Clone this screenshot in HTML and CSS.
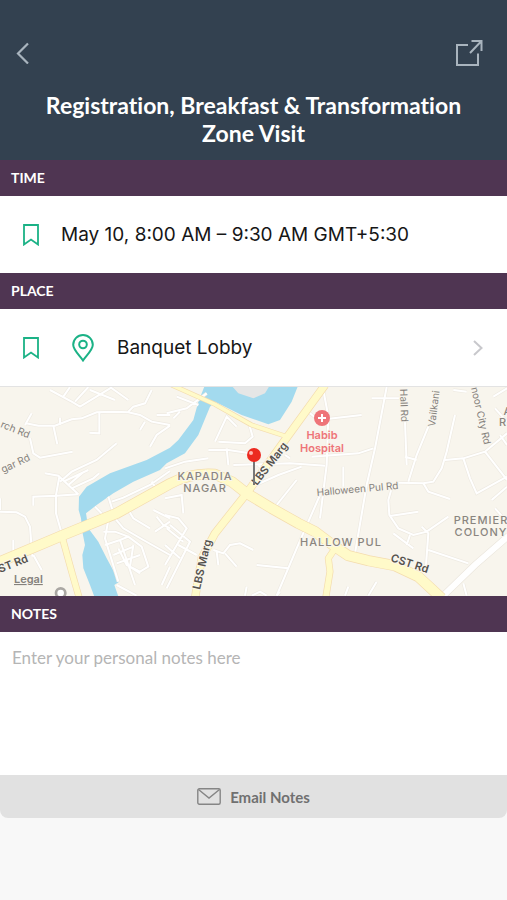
FILE: index.html
```html
<!DOCTYPE html>
<html lang="en">
<head>
  <meta charset="UTF-8">
  <meta name="viewport" content="width=device-width, initial-scale=1.0">
  <title>Session Details</title>
  <link rel="stylesheet" href="styles.css">
</head>
<body>
  <header class="header">
    <div class="toolbar">
      <button class="icon-btn" aria-label="Back">
        <svg width="14" height="22" viewBox="0 0 14 22"><path d="M12 1.500 2 11.500 12 21.500" stroke-width="2.200"/></svg>
      </button>
      <button class="icon-btn" aria-label="Share">
        <svg width="28" height="28" viewBox="0 0 28 28"><path d="M13 6H2v20h21V14.500M15 14 26 2.500M16.500 2H26.500V12" stroke-width="2"/></svg>
      </button>
    </div>
    <h1>Registration, Breakfast &amp; Transformation Zone Visit</h1>
  </header>

  <main>
    <h2 class="band">TIME</h2>
    <div class="row">
      <button class="icon-btn bookmark" aria-label="Bookmark time">
        <svg width="16" height="22" viewBox="0 0 16 22"><path d="M1 1H15V20.500L8 15.500 1 20.500Z" stroke-width="1.800"/></svg>
      </button>
      <span>May 10, 8:00 AM – 9:30 AM GMT+5:30</span>
    </div>

    <h2 class="band">PLACE</h2>
    <div class="row">
      <button class="icon-btn bookmark" aria-label="Bookmark place">
        <svg width="16" height="22" viewBox="0 0 16 22"><path d="M1 1H15V20.500L8 15.500 1 20.500Z" stroke-width="1.800"/></svg>
      </button>
      <a class="place" href="#map">
        <svg class="pin" width="22" height="28" viewBox="0 0 22 28"><path d="M11 26.500C8 22 1.200 16 1.200 10.800a9.800 9.800 0 0 1 19.600 0C20.800 16 14 22 11 26.500Z" stroke-width="2"/><circle cx="11" cy="10.500" r="3.800" stroke-width="2"/></svg>
        <span>Banquet Lobby</span>
        <svg class="chevron" width="10" height="16" viewBox="0 0 10 16"><path d="M1 1 8.500 8 1 15" stroke-width="2"/></svg>
      </a>
    </div>

    <svg class="map" id="map" viewBox="0 0 507 209" role="img" aria-label="Map of Kapadia Nagar">
      <!-- terrain and streets, drawn at triple scale -->
      <svg width="507" height="209" viewBox="0 6 1521 627">
        <path class="river" d="M615 0 595 50 580 105 535 165 510 188 440 225 330 265 260 305 237 335 236 375 243 400 247 440 255 480 247 510 250 550 270 600 285 640H357L343 600 358 590 320 520 295 470 265 430 258 385 290 360 340 325 400 290 480 255 500 235 555 205 595 150 630 65 645 50 725 90 805 118 840 105 875 50 895 0Z"/>
        <path class="island" d="M693 0 715 25 760 40 795 25 810 0Z"/>
        <defs>
          <g id="streets">
            <path d="M75 120 95 85M78 115 115 122 165 122 215 103 245 100 290 82 340 80 385 82 420 90 455 110 510 120M160 122 172 178M180 98 180 120M298 82 298 145 268 143M385 80 400 65 435 55 455 15M420 135 435 110M450 185 470 150 510 122M470 90 510 90"/>
            <path d="M90 160 100 205 120 218 218 200M135 265 175 272 235 328M180 290 215 260 290 225 350 175M190 290 265 255M205 300 250 262M215 310 280 280 298 265M100 362 100 335 170 332 235 328M178 275 168 330 168 385 185 445"/>
            <path d="M0 380 50 382 75 395 90 425 97 515M40 465 40 500M0 340V375M100 510 125 555"/>
            <path d="M335 350 370 338 450 300 510 258M455 290 475 320M325 335 345 400 370 430 430 465 510 510M385 375 400 400 450 430M285 365 325 405 315 460 355 590M315 480 360 465 385 455 425 485 445 545 420 560 380 540 355 490M340 510 400 485M350 535 420 510M385 455 345 440 310 440M360 465 405 600M400 480 390 545 420 565M460 375 510 400M470 395 490 420 510 430M465 440 510 410M485 600 510 545M350 600 410 632"/>
            <path d="M150 15 215 50 240 65 330 10M190 35 210 6M225 50 265 6M330 6 385 45M270 15 345 45M495 250 555 230 625 220M625 195 685 195 750 205M680 190 685 240M700 240 870 235 975 242M855 210 870 220M655 170 735 175 758 155 748 120M645 170 680 95 710 125M500 85 560 70 620 25M520 100 540 80M530 35 595 60M830 360 890 285M745 310 835 270 905 245M775 240 800 265M495 340 545 330 550 385M495 390 535 400 560 430 495 540M500 430 550 470M495 480 540 520M510 420 570 470 500 610M535 480 590 510M640 495 670 505 690 480 720 475 760 495M675 505 710 545M650 500 655 540M770 540 865 550M740 605 735 632M755 632 780 620 800 632M840 620 830 632 890 490 960 330M970 15 985 95 980 240 970 320 960 400"/>
            <path d="M930 85 955 105 1085 90M935 215 1075 205 1120 190M1160 6 1125 190 1100 300 1065 505M1115 40 1215 40M1030 245 1030 305M1215 110 1220 240M1215 215 1250 225M1225 290 1250 210 1285 125M1365 90 1340 200 1325 250 1300 290 1270 295 1195 293M1335 225 1390 220 1455 200 1521 145M1270 295 1285 320 1350 342M1175 310 1165 345 1168 390 1195 430 1240 450 1280 440 1345 395M1170 393 1255 380M1180 445 1240 490M1220 480 1230 450M1265 425 1285 445 1278 540M1285 495 1405 535M1455 200 1521 285M1500 150 1521 180M1390 220 1410 280 1430 325 1521 275M1475 345 1521 305M1485 370 1521 410M1485 70 1521 110M1480 35 1521 10M1360 15 1400 20M1390 595 1400 632M1035 632 1045 605M1105 632 1130 590"/>
          </g>
        </defs>
        <use class="street-edge" href="#streets"/>
        <use class="street" href="#streets"/>
        <path class="avenue-edge" d="M1330 632 1425 540 1525 453"/>
        <path class="avenue" d="M1330 632 1425 540 1525 453"/>
        <g class="lane-edge">
          <path d="M515 0 645 58 755 120 855 153"/>
          <path d="M188 462 215 560 238 640M1005 490 985 520 990 560 977 640" stroke-width="21"/>
          <path d="M975 0 855 165 740 325 645 445 605 520 585 640" stroke-width="25"/>
          <path d="M-5 532 190 450 350 385 510 296Q575 262 645 268L695 290 740 325 815 370 895 415 945 440 1005 485 1045 512 1105 527 1185 542 1255 575 1325 640" stroke-width="33"/>
        </g>
        <g class="lane">
          <path d="M515 0 645 58 755 120 855 153"/>
          <path d="M188 462 215 560 238 640M1005 490 985 520 990 560 977 640" stroke-width="17"/>
          <path d="M975 0 855 165 740 325 645 445 605 520 585 640" stroke-width="21"/>
          <path d="M-5 532 190 450 350 385 510 296Q575 262 645 268L695 290 740 325 815 370 895 415 945 440 1005 485 1045 512 1105 527 1185 542 1255 575 1325 640" stroke-width="29"/>
        </g>
        <circle class="station" cx="182" cy="624" r="14"/>
      </svg>

      <g class="road-name">
        <text transform="translate(0 40) rotate(22)">rch Rd</text>
        <text transform="translate(3 86) rotate(-25)">gar Rd</text>
        <text transform="translate(317 109) rotate(-5)">Halloween Pul Rd</text>
        <text transform="translate(400 2) rotate(88)">Hall Rd</text>
        <text transform="translate(435 40) rotate(-83)">Vailkani</text>
        <text transform="translate(471 1) rotate(77)">noor City Rd</text>
      </g>
      <g class="road-name major">
        <text transform="translate(0 186) rotate(-22)">ST Rd</text>
        <text transform="translate(200 203) rotate(-77)">LBS Marg</text>
        <text transform="translate(257 99) rotate(-52)">LBS Marg</text>
        <text transform="translate(390 174) rotate(18)">CST Rd</text>
      </g>
      <g class="area">
        <text x="205" y="93">KAPADIA</text>
        <text x="205" y="105">NAGAR</text>
        <text x="341" y="159">HALLOW PUL</text>
        <text x="481" y="137">PREMIER</text>
        <text x="481" y="149">COLONY</text>
        <text x="508" y="28">A</text>
        <text x="503" y="39">R</text>
      </g>
      <g class="hospital">
        <circle cx="322" cy="31" r="8"/>
        <path d="M322 27v8M318 31h8"/>
        <text x="322" y="52">Habib</text>
        <text x="322" y="65">Hospital</text>
      </g>
      <text class="legal" x="14" y="196">Legal</text>
      <path class="pin-stem" d="M254 72V98"/>
      <circle class="pin-head" cx="254" cy="68" r="7"/>
      <circle class="pin-shine" cx="251" cy="66" r="2"/>
    </svg>

    <h2 class="band"><label for="notes">NOTES</label></h2>
    <textarea class="notes" id="notes" placeholder="Enter your personal notes here"></textarea>
    <button class="email-btn">
      <svg width="24" height="17" viewBox="0 0 24 17"><rect x=".8" y=".8" width="22.400" height="15.400" rx="1.500"/><path d="M1.500 1.500 12 10 22.500 1.500"/></svg>
      Email Notes
    </button>
  </main>
</body>
</html>
```
FILE: styles.css
```css
* {
  box-sizing: border-box;
}
body {
  margin: 0;
  background-color: #f8f8f8;
  font-family: Inter, "Liberation Sans", sans-serif;
  color: #161616;
}
svg {
  display: block;
  fill: none;
}
.header {
  background-color: #334150;
  padding: 38px 24px 13px 16px;
  color: #fff;
}
.toolbar {
  display: flex;
  justify-content: space-between;
  align-items: center;
  height: 30px;
}
.icon-btn {
  background: none;
  border: none;
  padding: 0;
  cursor: pointer;
  color: #a9b4be;
}
.icon-btn svg,
.place svg {
  stroke: currentColor;
}
h1 {
  margin: 23px 0 0 8px;
  font-family: Lato, sans-serif;
  font-size: 23px;
  line-height: 28px;
  font-weight: 700;
  font-variant-ligatures: none;
  text-align: center;
}
.band {
  margin: 0;
  padding: 0 11px;
  background-color: #4f3552;
  color: #fff;
  font-family: Lato, sans-serif;
  font-size: 14px;
  font-weight: 700;
  line-height: 36px;
}
.row {
  display: flex;
  align-items: center;
  gap: 22px;
  height: 77px;
  padding: 0 24px 0 23px;
  background-color: #fff;
  font-size: 19px;
}
.bookmark {
  color: #1bb286;
}
.place {
  flex: 1;
  display: flex;
  align-items: center;
  gap: 23px;
  padding-left: 11px;
  color: inherit;
  text-decoration: none;
}
.pin {
  color: #1bb286;
}
.chevron {
  margin-left: auto;
  color: #c8c8cc;
}

/* map */
.map {
  width: 100%;
  border-top: 1px solid #e3e3e3;
  background-color: #f8f5ed;
  font-family: Inter, "Liberation Sans", sans-serif;
}
.river {
  fill: #a3daee;
}
.island {
  fill: #e5e6e6;
}
.street-edge {
  stroke: #eeeae2;
  stroke-width: 10;
}
.street {
  stroke: #fff;
  stroke-width: 6;
}
.avenue-edge {
  stroke: #ebe6dd;
  stroke-width: 22;
}
.avenue {
  stroke: #fff;
  stroke-width: 18;
}
.lane-edge {
  stroke: #f4dcae;
  stroke-width: 15;
  stroke-linejoin: round;
}
.lane {
  stroke: #fffac9;
  stroke-width: 11;
  stroke-linejoin: round;
}
.station {
  fill: #fff;
  stroke: #aaa7a3;
  stroke-width: 8;
}
.map text {
  paint-order: stroke;
  stroke: #f8f5ed;
  stroke-width: 2px;
}
.road-name {
  fill: #85817c;
  font-size: 10px;
}
.major {
  fill: #55524e;
  font-size: 11px;
  font-weight: 600;
}
.area {
  fill: #8a8580;
  font-size: 11px;
  font-weight: 500;
  letter-spacing: 1px;
  text-anchor: middle;
}
.hospital {
  fill: #ee7478;
  font-size: 11px;
  font-weight: 600;
  text-anchor: middle;
}
.hospital path {
  stroke: #fff;
  stroke-width: 2;
}
.legal {
  fill: #85817c;
  font-size: 11px;
  font-weight: 600;
  text-decoration: underline;
}
.pin-stem {
  stroke: #777;
  stroke-width: 2;
}
.pin-head {
  fill: #ec2a20;
}
.pin-shine {
  fill: #ffb5ae;
}

.notes {
  display: block;
  width: 100%;
  height: 143px;
  padding: 14px 12px;
  border: none;
  resize: none;
  background-color: #fff;
  font-family: Lato, sans-serif;
  font-size: 17px;
  line-height: 24px;
}
.notes::placeholder {
  color: #b5b5b5;
}
.email-btn {
  display: flex;
  justify-content: center;
  align-items: center;
  gap: 9px;
  width: 100%;
  height: 43px;
  border: none;
  border-radius: 0 0 8px 8px;
  background-color: #e1e1e1;
  color: #707070;
  font-family: Lato, sans-serif;
  font-size: 15px;
  font-weight: 700;
  cursor: pointer;
}
.email-btn svg {
  stroke: #858585;
  stroke-width: 1.4;
}
```
